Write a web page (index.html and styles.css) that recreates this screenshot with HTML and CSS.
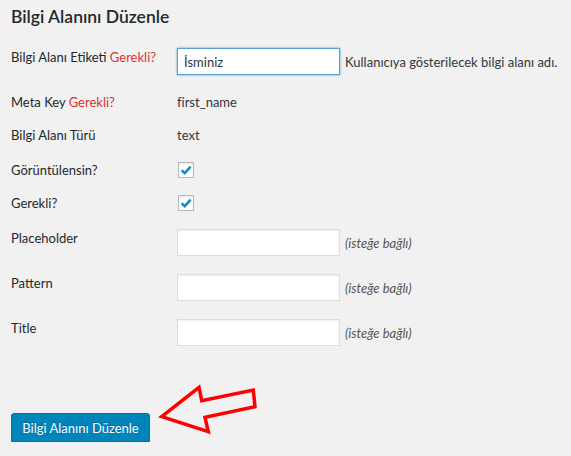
FILE: index.html
```html
<!DOCTYPE html>
<html lang="tr">
<head>
  <meta charset="UTF-8">
  <title>Bilgi Alanını Düzenle</title>
  <link rel="stylesheet" href="styles.css">
</head>
<body>
  <div class="wrap">
    <h2>Bilgi Alanını Düzenle</h2>

    <form class="form-table">
      <div class="row tall">
        <label class="label">Bilgi Alanı Etiketi <span class="req">Gerekli?</span></label>
        <div class="field">
          <input type="text" class="text focus" value="İsminiz">
          <span class="description">Kullanıcıya gösterilecek bilgi alanı adı.</span>
        </div>
      </div>

      <div class="row">
        <div class="label">Meta Key <span class="req">Gerekli?</span></div>
        <div class="field value">first_name</div>
      </div>

      <div class="row wide">
        <div class="label">Bilgi Alanı Türü</div>
        <div class="field value">text</div>
      </div>

      <div class="row">
        <div class="label">Görüntülensin?</div>
        <div class="field">
          <span class="checkbox">
            <svg width="14" height="14" viewBox="0 0 14 14"><path d="M2.6 7.2 L5.8 10.2 L11.6 3.6" fill="none" stroke="#1e8cbe" stroke-width="2.6"/></svg>
          </span>
        </div>
      </div>

      <div class="row wide">
        <div class="label">Gerekli?</div>
        <div class="field">
          <span class="checkbox">
            <svg width="14" height="14" viewBox="0 0 14 14"><path d="M2.6 7.2 L5.8 10.2 L11.6 3.6" fill="none" stroke="#1e8cbe" stroke-width="2.6"/></svg>
          </span>
        </div>
      </div>

      <div class="row tall">
        <div class="label">Placeholder</div>
        <div class="field">
          <input type="text" class="text">
          <span class="optional">(isteğe bağlı)</span>
        </div>
      </div>

      <div class="row tall">
        <div class="label">Pattern</div>
        <div class="field">
          <input type="text" class="text">
          <span class="optional">(isteğe bağlı)</span>
        </div>
      </div>

      <div class="row tall">
        <div class="label">Title</div>
        <div class="field">
          <input type="text" class="text">
          <span class="optional">(isteğe bağlı)</span>
        </div>
      </div>

      <div class="submit">
        <button type="button" class="button-primary">Bilgi Alanını Düzenle</button>
        <svg class="arrow" width="104" height="52" viewBox="0 0 104 52">
          <polygon points="3.7,32.7 41,3.3 43.7,16.7 95.3,6 97,22.7 47,33.3 50.3,47.7" fill="none" stroke="#ff0000" stroke-width="3.5" stroke-linejoin="miter"/>
        </svg>
      </div>
    </form>
  </div>
</body>
</html>
```

FILE: styles.css
```css
html, body {
  margin: 0;
  padding: 0;
  background-color: #f1f1f1;
  font-family: Lato, "Open Sans", sans-serif;
  font-size: 13px;
  line-height: 18px;
  color: #23282d;
}

.wrap {
  padding: 0 11px;
}

h2 {
  margin: 0;
  padding-top: 6px;
  font-size: 17.5px;
  line-height: 22px;
  font-weight: 600;
  color: #23282d;
}

.form-table {
  margin-top: 20px;
}

.row {
  display: flex;
  align-items: flex-start;
  min-height: 33px;
}

.row.wide {
  min-height: 35px;
}

.row.tall {
  min-height: 45px;
}

.label {
  width: 166px;
  flex-shrink: 0;
  color: #23282d;
}

.req {
  color: #dc3232;
}

.field {
  display: flex;
  align-items: center;
  gap: 5px;
}

.value {
  color: #32373c;
}

input.text {
  width: 163px;
  height: 27px;
  box-sizing: border-box;
  margin: 0;
  padding: 2px 6px;
  font-family: inherit;
  font-size: 13px;
  color: #32373c;
  background-color: #fff;
  border: 1px solid #ddd;
  box-shadow: inset 0 1px 2px rgba(0, 0, 0, 0.07);
  outline: none;
}

input.text.focus {
  border-color: #5b9dd9;
  box-shadow: 0 0 2px rgba(30, 140, 190, 0.8);
}

.description {
  white-space: nowrap;
  color: #32373c;
}

.optional {
  font-style: italic;
  color: #555;
}

.checkbox {
  display: flex;
  align-items: center;
  justify-content: center;
  width: 16px;
  height: 16px;
  box-sizing: border-box;
  margin-top: 1px;
  margin-left: 1px;
  background-color: #fff;
  border: 1px solid #b4b9be;
  box-shadow: inset 0 1px 2px rgba(0, 0, 0, 0.1);
}

.submit {
  display: flex;
  align-items: flex-start;
  padding-top: 49px;
}

.button-primary {
  width: 139px;
  height: 29px;
  padding: 0;
  font-family: inherit;
  font-size: 13px;
  color: #fff;
  background-color: #0085ba;
  border: 1px solid #0073aa;
  border-radius: 3px;
  box-shadow: 0 1px 0 #006799;
  text-shadow: 0 -1px 1px #006799;
  cursor: pointer;
}

.arrow {
  margin-left: 8px;
  margin-top: -29px;
}
```
